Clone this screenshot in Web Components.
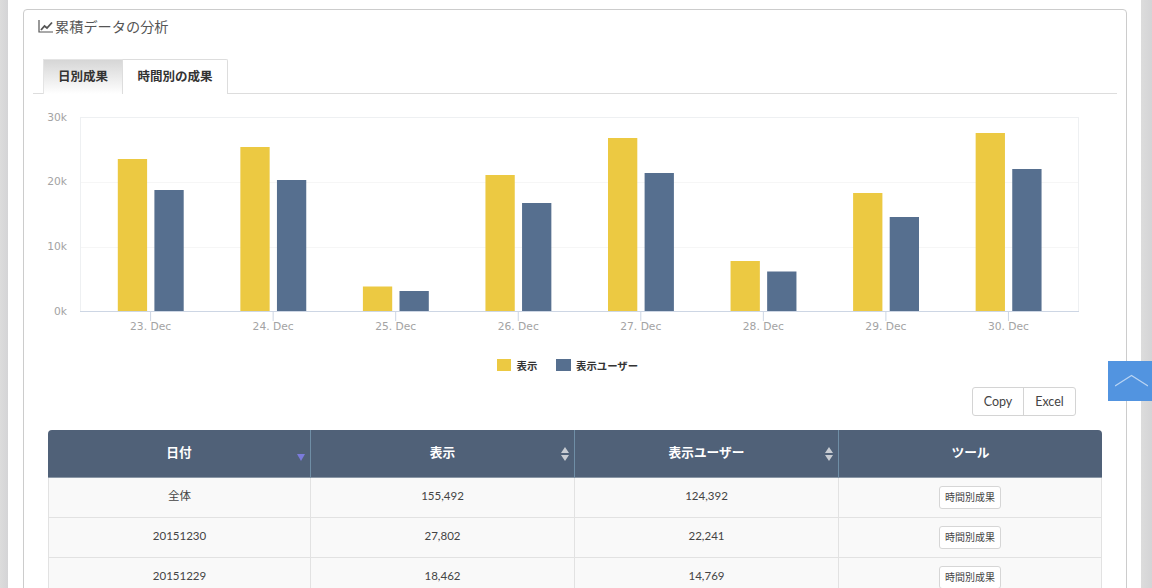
<!DOCTYPE html>
<html lang="ja"><head><meta charset="utf-8"><title>累積データの分析</title>
<style>
html,body{margin:0;padding:0;height:588px;overflow:hidden;background:#fff}
body{font-family:Lato,"Noto Sans CJK JP",sans-serif;color:#444}
</style></head><body>
<app-page>
  <panel-box heading="累積データの分析">
    <tab-bar></tab-bar>
    <bar-chart></bar-chart>
    <export-buttons></export-buttons>
    <data-table></data-table>
  </panel-box>
</app-page>
<back-top></back-top>
<script>
const FONT='Lato,"Noto Sans CJK JP",sans-serif';
customElements.define('app-page',class extends HTMLElement{constructor(){super();this.attachShadow({mode:'open'}).innerHTML=`
<style>
:host{display:flex;height:588px;overflow:hidden}
.side{flex:none;background:linear-gradient(90deg,#dcdcdc,#d4d4d6)}
.l{width:8px}.r{width:11px}
main{flex:1;min-width:0;padding:9px 14px 0 15px;background:#fff}
</style><div class="side l"></div><main><slot></slot></main><div class="side r"></div>`}});

customElements.define('panel-box',class extends HTMLElement{constructor(){super();this.attachShadow({mode:'open'}).innerHTML=`
<style>
:host{display:block;height:640px;box-sizing:border-box;border:1px solid #ccc;border-radius:4px;padding:0 9px}
h2{margin:0;height:49px;padding:6px 0 0 5px;box-sizing:border-box;display:flex;align-items:flex-start;font:400 14.2px/21px ${FONT};color:#555}
svg{flex:none;margin:3px 1px 0 0}
</style>
<h2><svg width="16" height="14" viewBox="0 0 16 14"><path d="M1 1v12h14" fill="none" stroke="#555" stroke-width="1.2"/><path d="M3 11l3.5-4 2.5 2 5-5.5" fill="none" stroke="#555" stroke-width="1.8"/></svg><span id="t"></span></h2><slot></slot>`;
this.shadowRoot.getElementById('t').textContent=this.getAttribute('heading')}});

customElements.define('tab-bar',class extends HTMLElement{constructor(){super();this.attachShadow({mode:'open'}).innerHTML=`
<style>
:host{display:flex;height:35px;box-sizing:border-box;border-bottom:1px solid #ddd;padding-left:10px}
div{box-sizing:border-box;height:35px;border:1px solid #ddd;border-bottom:0;font:700 12.5px/33px ${FONT};color:#333;text-align:center;background:#fff}
.a{width:80px;background:linear-gradient(#d6d6d6,#fff);border-color:#e4e4e4;border-right-color:#ddd}
.b{width:105px;border-left:0;border-radius:0 2px 0 0}
</style><div class="a">日別成果</div><div class="b">時間別の成果</div>`}});

customElements.define('bar-chart',class extends HTMLElement{constructor(){super();
const data=[[159,190],[147,180],[286.5,291],[175,203],[138,173],[261,271.5],[193,217],[133,169]];
const names=['23. Dec','24. Dec','25. Dec','26. Dec','27. Dec','28. Dec','29. Dec','30. Dec'];
const ox=33,oy=94;
let s='';
const X=x=>x-ox,Y=y=>y-oy;
s+=`<rect x="${X(80.5)}" y="${Y(117.5)}" width="998" height="194" fill="#fff" stroke="#eef0f2"/>`;
[182.5,247.5].forEach(y=>s+=`<line x1="${X(81)}" x2="${X(1078)}" y1="${Y(y)}" y2="${Y(y)}" stroke="#f6f6f6"/>`);
[['30k',117],['20k',181],['10k',246],['0k',311]].forEach(([t,y])=>s+=`<text x="${X(67)}" y="${Y(y+4)}" text-anchor="end" class="ax">${t}</text>`);
s+=`<line x1="${X(80)}" x2="${X(1079)}" y1="${Y(311.5)}" y2="${Y(311.5)}" stroke="#cdd6e4"/>`;
data.forEach((d,i)=>{const g=117.8+i*122.55;
 s+=`<rect x="${X(g)}" y="${Y(d[0])}" width="29.3" height="${311-d[0]}" fill="#ecc942"/>`;
 s+=`<rect x="${X(g+36.6)}" y="${Y(d[1])}" width="29.3" height="${311-d[1]}" fill="#566f8f"/>`;
 const c=g+32.8;
 s+=`<line x1="${X(c)}" x2="${X(c)}" y1="${Y(311)}" y2="${Y(321)}" stroke="#cdd6e4"/>`;
 s+=`<text x="${X(c)}" y="${Y(330)}" text-anchor="middle" class="ax">${names[i]}</text>`;
});
s+=`<rect x="${X(497)}" y="${Y(359)}" width="14" height="12" fill="#ecc942"/><text x="${X(516.5)}" y="${Y(369.5)}" class="lg">表示</text>`;
s+=`<rect x="${X(556)}" y="${Y(359)}" width="15" height="12" fill="#566f8f"/><text x="${X(576)}" y="${Y(369.5)}" class="lg">表示ユーザー</text>`;
this.attachShadow({mode:'open'}).innerHTML=`
<style>:host{display:block;height:293px}svg{display:block}
.ax{font:10.7px "DejaVu Sans",sans-serif;fill:#a3a3a3}
.lg{font:700 10.4px ${FONT};fill:#333}</style>
<svg width="1084" height="293" viewBox="0 0 1084 293">${s}</svg>`}});

customElements.define('export-buttons',class extends HTMLElement{constructor(){super();this.attachShadow({mode:'open'}).innerHTML=`
<style>:host{display:flex;justify-content:flex-end;height:43px;padding-right:41px}
.g{display:flex;height:29px;box-sizing:border-box;border:1px solid #d4d4d4;border-radius:3px}
span{font:12.5px/27px ${FONT};color:#444;text-align:center}
.c{width:50px;border-right:1px solid #d4d4d4}.e{width:51px}</style>
<div class="g"><span class="c">Copy</span><span class="e">Excel</span></div>`}});

customElements.define('data-table',class extends HTMLElement{constructor(){super();
const heads=[['日付','d'],['表示','s'],['表示ユーザー','s'],['ツール','']];
const rows=[['全体','155,492','124,392'],['20151230','27,802','22,241'],['20151229','18,462','14,769']];
const icon=k=>k==='d'?'<svg class="i" style="right:5px;bottom:16px" width="8" height="7"><path d="M0 0h8L4 7z" fill="#7b7bdc"/></svg>':k==='s'?'<svg class="i" style="right:5px;bottom:16px" width="8" height="14"><path d="M4 0l4 6H0zM4 14L0 8h8z" fill="#c8ccd2"/></svg>':'';
this.attachShadow({mode:'open'}).innerHTML=`
<style>
:host{display:block;margin:0 15px 0 15px;font-family:${FONT}}
.grid{display:grid;grid-template-columns:263px 264px 264px 263px}
.h{position:relative;height:48px;box-sizing:border-box;background:#506178;color:#fff;font:700 12.7px/45px ${FONT};text-align:center;border-right:1px solid #6f8ea6;border-bottom:1px solid #8a97a6}
.h.f{border-radius:4px 0 0 0}.h.l{border-radius:0 4px 0 0;border-right:0}
.i{position:absolute}
.c{height:40px;box-sizing:border-box;background:#f9f9f9;border-right:1px solid #e2e2e2;border-bottom:1px solid #e2e2e2;font:11.5px/36px ${FONT};color:#444;text-align:center;display:flex;justify-content:center;align-items:flex-start}
.c.f{border-left:1px solid #e2e2e2}
.c.b{padding-top:8px}
tool-button{display:block}
</style>
<div class="grid">
${heads.map((h,i)=>`<div class="h ${i==0?'f':i==3?'l':''}">${h[0]}${icon(h[1])}</div>`).join('')}
${rows.map(r=>r.map((v,i)=>`<div class="c ${i==0?'f':''}">${v}</div>`).join('')+'<div class="c b"><tool-button>時間別成果</tool-button></div>').join('')}
</div>`}});

customElements.define('tool-button',class extends HTMLElement{constructor(){super();this.attachShadow({mode:'open'}).innerHTML=`
<style>:host{display:block;width:62px;height:23px;box-sizing:border-box;border:1px solid #d6d6d6;border-radius:3px;background:#fff;font:10px/21px ${FONT};color:#444;text-align:center}</style><slot></slot>`}});

customElements.define('back-top',class extends HTMLElement{constructor(){super();this.attachShadow({mode:'open'}).innerHTML=`
<style>:host{position:fixed;left:1108px;top:361px;width:44px;height:40px;box-sizing:border-box;padding-left:3px;background:#5294e0;display:flex;align-items:center;justify-content:center}</style>
<svg width="33" height="14" viewBox="0 0 33 14"><path d="M0 12L16.5 1.5L33 12" fill="none" stroke="#b9d4f3" stroke-width="1.2"/></svg>`}});
</script>
</body></html>
